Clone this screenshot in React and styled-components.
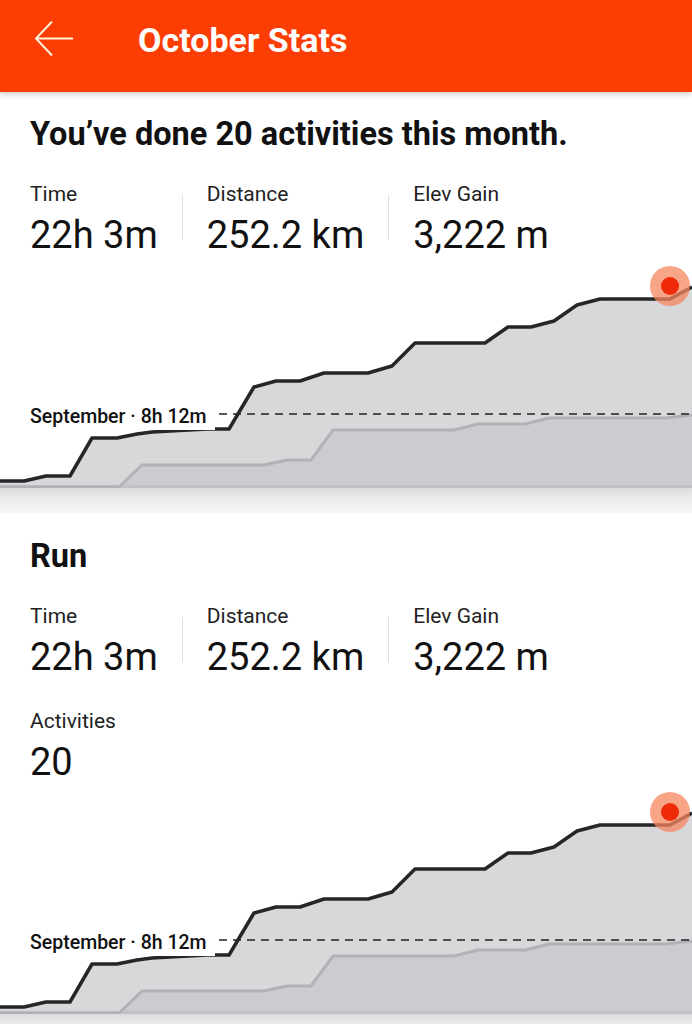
import React from "react";
import styled, { createGlobalStyle } from "styled-components";

const GlobalStyle = createGlobalStyle`
  html, body {
    margin: 0;
    padding: 0;
    background: #ffffff;
    font-family: Roboto, "Noto Sans", sans-serif;
    color: #111;
  }
`;

const orange = `#fc3d04`;

const Page = styled.div`
  width: 692px;
  height: 1024px;
  overflow: hidden;
  background: #fff;
`;

const Header = styled.header`
  position: relative;
  z-index: 2;
  height: 92px;
  display: flex;
  align-items: center;
  background: ${orange};
  box-shadow: 0 2px 6px rgba(0, 0, 0, 0.22);
`;

const BackButton = styled.button`
  width: 138px;
  height: 92px;
  padding: 0 0 14px 33px;
  display: flex;
  align-items: center;
  border: none;
  background: transparent;
`;

const Title = styled.h1`
  margin: 0 0 13px;
  font-size: 34px;
  line-height: 40px;
  font-weight: 700;
  color: #fff;
`;

const Card = styled.section`
  background: #fff;
  padding-top: ${(p) => p.top}px;
`;

const Heading = styled.h2`
  margin: 0 0 28px 30px;
  font-size: ${(p) => p.size}px;
  line-height: 38px;
  font-weight: 700;
  color: #111;
`;

const StatRow = styled.div`
  display: flex;
  padding-left: 30px;
  margin-bottom: ${(p) => p.gap || 0}px;
`;

const Stat = styled.div`
  display: flex;
  flex-direction: column;
  padding: 0 24px;
  &:first-child {
    padding-left: 0;
  }
`;

const Divider = styled.div`
  width: 1px;
  margin: 14px 0 17px;
  background: #dedede;
`;

const Label = styled.div`
  font-size: 21px;
  line-height: 25px;
  color: #222;
  margin-top: 1px;
  margin-bottom: 6px;
`;

const Value = styled.div`
  font-size: 38px;
  line-height: 44px;
  color: #111;
`;

const ChartWrap = styled.div`
  position: relative;
  height: 228px;
  margin-top: ${(p) => p.top}px;
  svg {
    display: block;
  }
`;

const ChartLabel = styled.div`
  position: absolute;
  left: 22px;
  top: 144px;
  padding: 0 8px;
  height: 26px;
  line-height: 26px;
  background: #fff;
  font-size: 19.5px;
  font-weight: 500;
  color: #111;
  white-space: nowrap;
`;

const Band = styled.div`
  height: 25px;
  background: linear-gradient(#dcdcde, #eaeaea 40%, #f7f7f7);
`;

const current = [
  [0, 221], [24, 221], [46, 216], [70, 216], [92, 178], [117, 178],
  [137, 174], [152, 172], [207, 169], [229, 169], [254, 127], [276, 121],
  [300, 121], [324, 113], [368, 113], [392, 106], [415, 83], [485, 83],
  [508, 67], [531, 67], [554, 61], [577, 45], [600, 39], [670, 39], [692, 27],
];

const previous = [
  [0, 227], [119, 227], [142, 205], [264, 205], [287, 200], [311, 200],
  [333, 170], [454, 170], [478, 164], [525, 164], [549, 158], [666, 158],
  [692, 155],
];

const toLine = (pts) => pts.map(([x, y]) => `${x},${y}`).join(" ");
const toArea = (pts) => `0,228 ${toLine(pts)} 692,228`;

const ArrowIcon = () => (
  <svg width="42" height="36" viewBox="0 0 42 36">
    <path
      d="M40 17.5H3M19 0.5L3 17.5L19 34.5"
      fill="none"
      stroke="#fff3dc"
      strokeWidth="2"
    />
  </svg>
);

const MonthChart = ({ top }) => (
  <ChartWrap top={top}>
    <svg width="692" height="228" viewBox="0 0 692 228">
      <polygon points={toArea(current)} fill="#d8d8db" />
      <polygon points={toArea(previous)} fill="#cbcbd0" />
      <rect x="0" y="225" width="692" height="3" fill="#c2c2c6" />
      <polyline
        points={toLine(previous)}
        fill="none"
        stroke="#b1b1b6"
        strokeWidth="3"
      />
      <line
        x1="205"
        y1="154"
        x2="692"
        y2="154"
        stroke="#222"
        strokeWidth="1.5"
        strokeDasharray="8 6"
      />
      <polyline
        points={toLine(current)}
        fill="none"
        stroke="#262628"
        strokeWidth="3.5"
        strokeLinejoin="round"
      />
      <circle cx="670" cy="26" r="20" fill="#f6855f" opacity="0.75" />
      <circle cx="670" cy="26" r="9" fill="#ee2a08" />
    </svg>
    <ChartLabel>September · 8h 12m</ChartLabel>
  </ChartWrap>
);

const Stats = ({ gap }) => (
  <StatRow gap={gap}>
    <Stat>
      <Label>Time</Label>
      <Value>22h 3m</Value>
    </Stat>
    <Divider />
    <Stat>
      <Label>Distance</Label>
      <Value>252.2 km</Value>
    </Stat>
    <Divider />
    <Stat>
      <Label>Elev Gain</Label>
      <Value>3,222 m</Value>
    </Stat>
  </StatRow>
);

export default function App() {
  return (
    <Page>
      <GlobalStyle />
      <Header>
        <BackButton aria-label="Back">
          <ArrowIcon />
        </BackButton>
        <Title>October Stats</Title>
      </Header>

      <Card top={23}>
        <Heading size={32.5}>You’ve done 20 activities this month.</Heading>
        <Stats />
        <MonthChart top={3} />
      </Card>
      <Band />

      <Card top={24}>
        <Heading size={32.5}>Run</Heading>
        <Stats gap={29} />
        <StatRow>
          <Stat>
            <Label>Activities</Label>
            <Value>20</Value>
          </Stat>
        </StatRow>
        <MonthChart top={2} />
      </Card>
      <Band />
    </Page>
  );
}
